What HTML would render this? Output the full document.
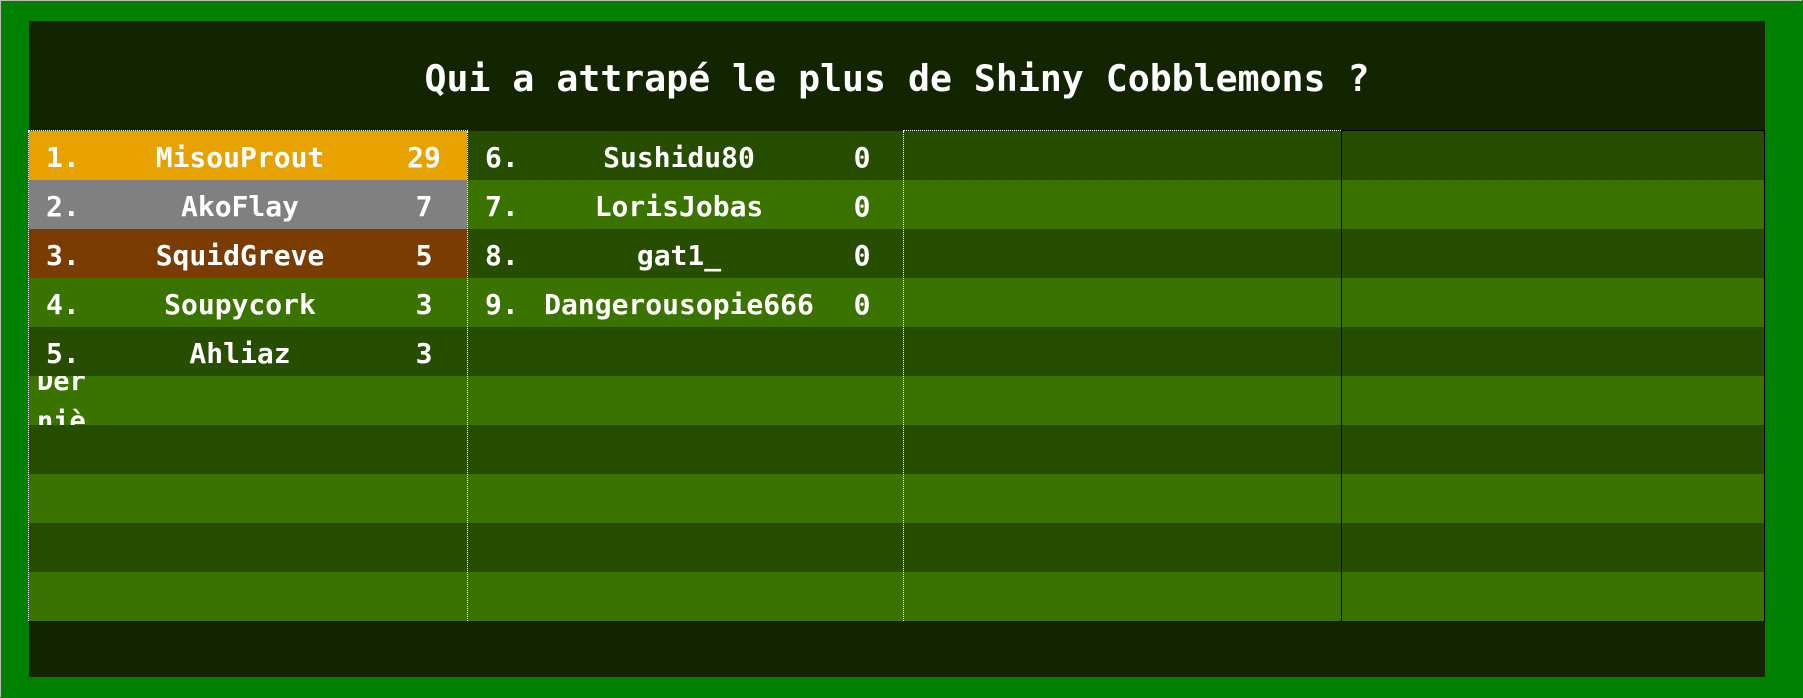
<!DOCTYPE html>
<html><head><meta charset="utf-8"><style>
html,body{margin:0;padding:0}
body{width:1803px;height:698px;background:#008000;position:relative;overflow:hidden;font-family:"DejaVu Sans Mono","Liberation Mono",monospace;font-weight:bold;color:#fff}
.edge{position:absolute;left:0;top:0;width:1801px;height:696px;border-top:1px solid #bbb;border-left:1px solid #bbb}
.inner{position:absolute;left:29px;top:21px;width:1736px;height:656px;background:#132400}
.title{position:absolute;left:29px;top:21px;width:1736px;height:110px;line-height:116px;text-align:center;font-size:36.5px}
.row{position:absolute;left:29px;width:1736px;height:49px}
.d{background:#264d00}.l{background:#3a7300}
.cell{position:absolute;height:49px;line-height:53px;font-size:28px;white-space:nowrap}
.vl{position:absolute;top:131px;height:490px;width:0}
</style></head><body>
<div class="edge"></div>
<div class="inner"></div>
<div class="title">Qui a attrapé le plus de Shiny Cobblemons ?</div>

<div class="row d" style="top:131px"></div>
<div class="row l" style="top:180px"></div>
<div class="row d" style="top:229px"></div>
<div class="row l" style="top:278px"></div>
<div class="row d" style="top:327px"></div>
<div class="row l" style="top:376px"></div>
<div class="row d" style="top:425px"></div>
<div class="row l" style="top:474px"></div>
<div class="row d" style="top:523px"></div>
<div class="row l" style="top:572px"></div>

<div style="position:absolute;left:29px;top:131px;width:438px;height:49px;background:#e8a200"></div>
<div style="position:absolute;left:29px;top:180px;width:438px;height:49px;background:#808080"></div>
<div style="position:absolute;left:29px;top:229px;width:438px;height:49px;background:#7b3c04"></div>

<div class="vl" style="left:28px;border-left:1px dotted #fff"></div>
<div class="vl" style="left:467px;border-left:1px dotted #fff"></div>
<div class="vl" style="left:903px;border-left:1px dotted #fff"></div>
<div class="vl" style="left:1341px;border-left:1px solid #000"></div>
<div class="vl" style="left:1764px;border-left:1px solid #000"></div>
<div style="position:absolute;left:28px;top:130px;width:440px;height:0;border-top:1px dotted #fff"></div>
<div style="position:absolute;left:903px;top:130px;width:438px;height:0;border-top:1px dotted #fff"></div>
<div style="position:absolute;left:1341px;top:130px;width:424px;height:0;border-top:1px solid #000"></div>

<div class="cell" style="left:46px;top:131px">1.</div><div class="cell" style="left:140px;width:200px;text-align:center;top:131px">MisouProut</div><div class="cell" style="left:384px;width:80px;text-align:center;top:131px">29</div>
<div class="cell" style="left:46px;top:180px">2.</div><div class="cell" style="left:140px;width:200px;text-align:center;top:180px">AkoFlay</div><div class="cell" style="left:384px;width:80px;text-align:center;top:180px">7</div>
<div class="cell" style="left:46px;top:229px">3.</div><div class="cell" style="left:140px;width:200px;text-align:center;top:229px">SquidGreve</div><div class="cell" style="left:384px;width:80px;text-align:center;top:229px">5</div>
<div class="cell" style="left:46px;top:278px">4.</div><div class="cell" style="left:140px;width:200px;text-align:center;top:278px">Soupycork</div><div class="cell" style="left:384px;width:80px;text-align:center;top:278px">3</div>
<div class="cell" style="left:46px;top:327px">5.</div><div class="cell" style="left:140px;width:200px;text-align:center;top:327px">Ahliaz</div><div class="cell" style="left:384px;width:80px;text-align:center;top:327px">3</div>

<div class="cell" style="left:485px;top:131px">6.</div><div class="cell" style="left:529px;width:300px;text-align:center;top:131px">Sushidu80</div><div class="cell" style="left:822px;width:80px;text-align:center;top:131px">0</div>
<div class="cell" style="left:485px;top:180px">7.</div><div class="cell" style="left:529px;width:300px;text-align:center;top:180px">LorisJobas</div><div class="cell" style="left:822px;width:80px;text-align:center;top:180px">0</div>
<div class="cell" style="left:485px;top:229px">8.</div><div class="cell" style="left:529px;width:300px;text-align:center;top:229px">gat1_</div><div class="cell" style="left:822px;width:80px;text-align:center;top:229px">0</div>
<div class="cell" style="left:485px;top:278px">9.</div><div class="cell" style="left:529px;width:300px;text-align:center;top:278px">Dangerousopie666</div><div class="cell" style="left:822px;width:80px;text-align:center;top:278px">0</div>

<div style="position:absolute;left:37px;top:376px;width:60px;height:49px;overflow:hidden">
  <div style="position:absolute;left:0;top:-14px;font-size:27px;line-height:40px;width:56px;white-space:normal">Der niè</div>
</div>
</body></html>
